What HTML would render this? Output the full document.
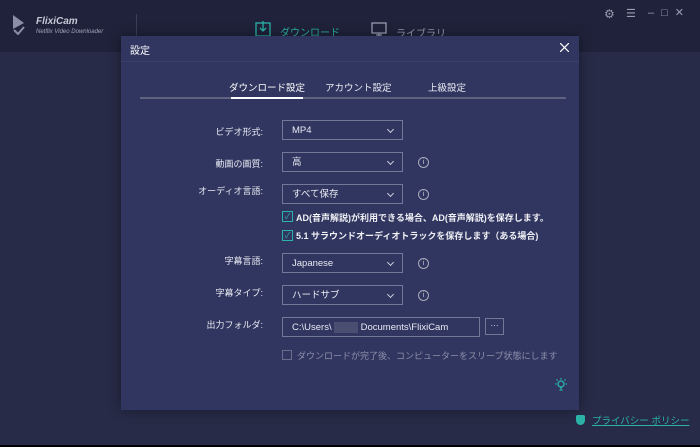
<html><head><style>
body{margin:0;width:700px;height:447px;background:#272b47;font-family:"Liberation Sans","Noto Sans CJK JP",sans-serif;position:relative;overflow:hidden;color:#e6e8f0}
.a{position:absolute}
.hdr{left:0;top:0;width:700px;height:52px;background:#1f223a}
.dlg{left:121px;top:36px;width:458px;height:374px;background:#313660;box-shadow:0 0 12px rgba(0,0,0,.4)}
.lbl{font-size:9px;right:437px;text-align:right;color:#e8eaf2}
.sel{left:282px;width:121px;height:20px;border:1px solid #737899;font-size:9.5px;line-height:20px;padding-left:9px;box-sizing:border-box;color:#e8eaf2}
.dd:after{content:"";position:absolute;right:9px;top:6px;width:4px;height:4px;border-right:1px solid #ccd;border-bottom:1px solid #ccd;transform:rotate(45deg)}
.info{left:418px;width:9px;height:9px;border:1px solid #aab;border-radius:50%;font-size:7px;line-height:9px;text-align:center;color:#ccd}
.cb{left:282px;width:9px;height:9px;border:1px solid #2bb3a8;font-size:8px;line-height:9px;text-align:center;color:#2bb3a8}
.ct{left:296px;font-size:9px;color:#f0f0f5;font-weight:bold}
</style></head><body>
<div class="a hdr"></div>
<div class="a" style="left:0;top:445px;width:700px;height:2px;background:#000"></div>
<svg class="a" style="left:13px;top:15px" width="12" height="20"><path d="M0 0 L11 8 L0 14Z" fill="#8a8ea6"/><path d="M1 15 L5 19 L11 12" stroke="#8a8ea6" stroke-width="2" fill="none"/></svg>
<div class="a" style="left:36px;top:16px;font-size:10px;font-style:italic;font-weight:bold;color:#c8cad8">FlixiCam</div>
<div class="a" style="left:36px;top:29px;font-size:6px;font-style:italic;color:#a0a3b8">Netflix Video Downloader</div>
<div class="a" style="left:136px;top:14px;width:1px;height:38px;background:#3a3e5a"></div>
<svg class="a" style="left:255px;top:21px" width="16" height="16"><rect x="1" y="2" width="14" height="13" fill="none" stroke="#2bb3a8" stroke-width="1.3"/><path d="M8 0V10M5 7L8 10L11 7" stroke="#2bb3a8" stroke-width="1.3" fill="none"/></svg>
<div class="a" style="left:280px;top:24px;font-size:10px;color:#2bb3a8">ダウンロード</div>
<svg class="a" style="left:371px;top:22px" width="16" height="16"><rect x="1" y="1" width="14" height="10" fill="none" stroke="#9a9db2" stroke-width="1.3"/><path d="M5 13H11M8 11V15" stroke="#9a9db2" stroke-width="1.3"/></svg>
<div class="a" style="left:396px;top:25px;font-size:10px;color:#9a9db2">ライブラリ</div>
<div class="a" style="left:604px;top:7px;font-size:12px;color:#9a9db2">⚙</div>
<div class="a" style="left:626px;top:7px;font-size:11px;color:#9a9db2">☰</div>
<div class="a" style="left:648px;top:6px;font-size:11px;color:#9a9db2;letter-spacing:7px">–□✕</div>
<div class="a dlg"></div>
<div class="a" style="left:130px;top:42px;font-size:10px;color:#fff">設定</div>
<svg class="a" style="left:560px;top:43px" width="9" height="9"><path d="M0 0L9 9M9 0L0 9" stroke="#fff" stroke-width="1.2"/></svg>
<div class="a" style="left:121px;top:61px;width:458px;height:1px;background:#3b4068"></div>
<div class="a" style="left:229px;top:80px;font-size:9.5px;color:#fff">ダウンロード設定</div>
<div class="a" style="left:325px;top:80px;font-size:9.5px;color:#e8eaf2">アカウント設定</div>
<div class="a" style="left:428px;top:80px;font-size:9.5px;color:#e8eaf2">上級設定</div>
<div class="a" style="left:140px;top:97px;width:426px;height:2px;background:#5f6380"></div>
<div class="a" style="left:231px;top:97px;width:72px;height:2px;background:#fff"></div>
<div class="a lbl" style="top:125px">ビデオ形式:</div>
<div class="a sel dd" style="top:120px">MP4</div>
<div class="a lbl" style="top:157px">動画の画質:</div>
<div class="a sel dd" style="top:152px">高</div><div class="a info" style="top:157px">i</div>
<div class="a lbl" style="top:184px">オーディオ言語:</div>
<div class="a sel dd" style="top:184px">すべて保存</div><div class="a info" style="top:189px">i</div>
<div class="a cb" style="top:211px">✓</div><div class="a ct" style="top:211px">AD(音声解説)が利用できる場合、AD(音声解説)を保存します。</div>
<div class="a cb" style="top:230px">✓</div><div class="a ct" style="top:229px">5.1 サラウンドオーディオトラックを保存します（ある場合)</div>
<div class="a lbl" style="top:254px">字幕言語:</div>
<div class="a sel dd" style="top:253px">Japanese</div><div class="a info" style="top:258px">i</div>
<div class="a lbl" style="top:286px">字幕タイプ:</div>
<div class="a sel dd" style="top:285px">ハードサブ</div><div class="a info" style="top:290px">i</div>
<div class="a lbl" style="top:318px">出力フォルダ:</div>
<div class="a sel" style="top:317px;width:198px">C:\Users\ <span style="background:#4a4f72;color:transparent">xxxxx</span> Documents\FlixiCam</div>
<div class="a" style="left:485px;top:318px;width:19px;height:17px;border:1px solid #737899;box-sizing:border-box;font-size:8px;text-align:center;line-height:13px">···</div>
<div class="a" style="left:282px;top:350px;width:8px;height:8px;border:1px solid #6a6e8a"></div>
<div class="a" style="left:297px;top:349px;font-size:9px;color:#8c90aa">ダウンロードが完了後、コンピューターをスリープ状態にします</div>
<svg class="a" style="left:554px;top:378px" width="14" height="14"><circle cx="7" cy="6" r="3" fill="none" stroke="#2bb3a8" stroke-width="1.3"/><path d="M6 10h2M7 0v1.5M1 6h1.5M11.5 6H13M2.5 1.5l1 1M11.5 1.5l-1 1M5.5 12h3" stroke="#2bb3a8" stroke-width="1.3"/></svg>
<div class="a" style="left:576px;top:415px;width:9px;height:10px;background:#2bb3a8;border-radius:2px 2px 5px 5px"></div>
<div class="a" style="left:592px;top:413px;font-size:9.5px;color:#2bb3a8;text-decoration:underline">プライバシー ポリシー</div>
</body></html>
